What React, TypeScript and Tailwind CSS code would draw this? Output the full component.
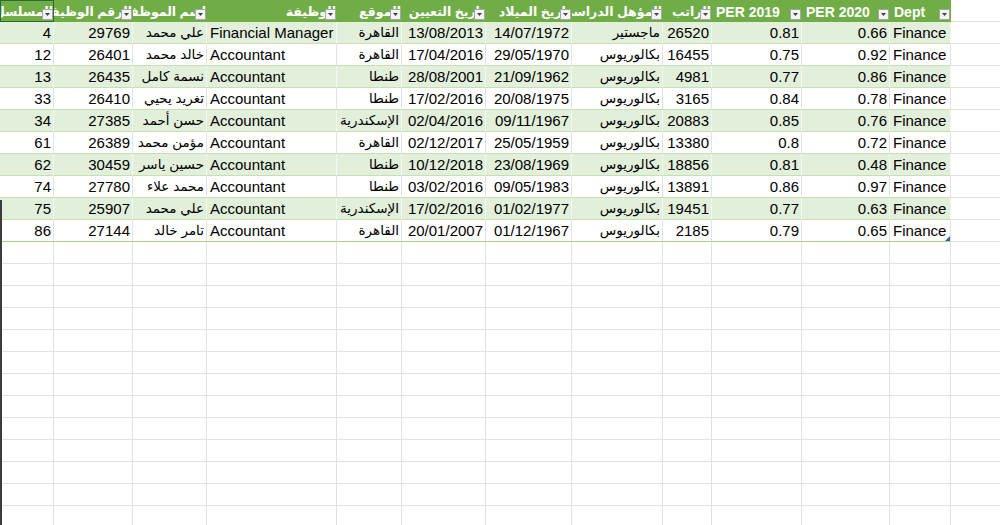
const widths = [
  'w-[54px]', 'w-[79px]', 'w-[74px]', 'w-[130px]', 'w-[65px]', 'w-[84px]',
  'w-[86px]', 'w-[91px]', 'w-[49px]', 'w-[90px]', 'w-[88px]', 'w-[61px]',
];

// 'r' = right aligned (numbers, arabic), 'l' = left aligned (latin text)
const align = ['r', 'r', 'r', 'l', 'r', 'r', 'r', 'r', 'r', 'r', 'r', 'l'];

const headers = [
  'المسلسل', 'الرقم الوظيفي', 'اسم الموظف', 'الوظيفة', 'الموقع', 'تاريخ التعيين',
  'تاريخ الميلاد', 'المؤهل الدراسي', 'الراتب', 'PER 2019', 'PER 2020', 'Dept',
];
const headerAlign = ['r', 'r', 'r', 'r', 'r', 'r', 'r', 'r', 'r', 'l', 'l', 'l'];

const rows = [
  ['4', '29769', 'علي محمد', 'Financial Manager', 'القاهرة', '13/08/2013', '14/07/1972', 'ماجستير', '26520', '0.81', '0.66', 'Finance'],
  ['12', '26401', 'خالد محمد', 'Accountant', 'القاهرة', '17/04/2016', '29/05/1970', 'بكالوريوس', '16455', '0.75', '0.92', 'Finance'],
  ['13', '26435', 'نسمة كامل', 'Accountant', 'طنطا', '28/08/2001', '21/09/1962', 'بكالوريوس', '4981', '0.77', '0.86', 'Finance'],
  ['33', '26410', 'تغريد يحيي', 'Accountant', 'طنطا', '17/02/2016', '20/08/1975', 'بكالوريوس', '3165', '0.84', '0.78', 'Finance'],
  ['34', '27385', 'حسن أحمد', 'Accountant', 'الإسكندرية', '02/04/2016', '09/11/1967', 'بكالوريوس', '20883', '0.85', '0.76', 'Finance'],
  ['61', '26389', 'مؤمن محمد', 'Accountant', 'القاهرة', '02/12/2017', '25/05/1959', 'بكالوريوس', '13380', '0.8', '0.72', 'Finance'],
  ['62', '30459', 'حسين ياسر', 'Accountant', 'طنطا', '10/12/2018', '23/08/1969', 'بكالوريوس', '18856', '0.81', '0.48', 'Finance'],
  ['74', '27780', 'محمد علاء', 'Accountant', 'طنطا', '03/02/2016', '09/05/1983', 'بكالوريوس', '13891', '0.86', '0.97', 'Finance'],
  ['75', '25907', 'علي محمد', 'Accountant', 'الإسكندرية', '17/02/2016', '01/02/1977', 'بكالوريوس', '19451', '0.77', '0.63', 'Finance'],
  ['86', '27144', 'تامر خالد', 'Accountant', 'القاهرة', '20/01/2007', '01/12/1967', 'بكالوريوس', '2185', '0.79', '0.65', 'Finance'],
];

const emptyRows = Array.from({ length: 13 });
const isArabic = (s: string) => /[\u0600-\u06FF]/.test(s);

const FilterButton = () => (
  <div className="absolute right-[1px] top-[9px] w-[11px] h-[11px] bg-[#f4f4f4] border border-[#a6a6a6] flex items-center justify-center">
    <svg width="5" height="3" viewBox="0 0 5 3">
      <path d="M0 0 L5 0 L2.5 3 Z" fill="#444" />
    </svg>
  </div>
);

export default function App() {
  return (
    <div className="relative w-[1000px] h-[525px] overflow-hidden bg-white text-black" style={{ fontFamily: '"Liberation Sans", "DejaVu Sans", sans-serif' }}>
      {/* header */}
      <div className="flex h-[22px]">
        {headers.map((h, i) => (
          <div key={i} className={`relative shrink-0 h-full overflow-hidden bg-[#70ad47] text-white font-bold flex items-end pb-[1px] ${widths[i]} ${headerAlign[i] === 'r' ? 'justify-end pr-[1px]' : 'justify-start pl-[4px]'}`}>
            <span className={`shrink-0 whitespace-nowrap ${isArabic(h) ? 'text-[12.5px] leading-[18px]' : 'text-[14px] leading-[18px]'}`}>{h}</span>
            <FilterButton />
            {i === 0 && <div className="absolute inset-0 border border-[#2a6b34]" />}
          </div>
        ))}
        <div className="flex-1 h-full border-b border-[#e1e1e1]" />
      </div>

      {/* data rows */}
      {rows.map((r, ri) => {
        const band = ri % 2 === 0;
        const last = ri === rows.length - 1;
        return (
          <div key={ri} className="flex h-[22px]">
            {r.map((v, ci) => (
              <div
                key={ci}
                className={`relative shrink-0 h-full overflow-hidden flex items-end pb-[1px] border-b border-r ${widths[ci]} ${band ? 'bg-[#e2efda] border-r-[#f3f9ef]' : 'bg-white border-r-[#e3e3e3]'} ${last ? 'border-b-[#a9d08e]' : 'border-b-[#c6e0b4]'} ${align[ci] === 'r' ? 'justify-end pr-[2px]' : 'justify-start pl-[3px]'}`}
              >
                <span className={`shrink-0 whitespace-nowrap leading-[18px] ${isArabic(v) ? 'text-[13.5px]' : 'text-[15px]'}`}>{v}</span>
                {last && ci === r.length - 1 && (
                  <svg className="absolute right-0 bottom-0" width="5" height="5" viewBox="0 0 5 5">
                    <path d="M5 0 L5 5 L0 5 Z" fill="#2f5fb3" />
                  </svg>
                )}
              </div>
            ))}
            <div className="flex-1 h-full border-b border-[#e1e1e1]" />
          </div>
        );
      })}

      {/* empty grid */}
      {emptyRows.map((_, ri) => (
        <div key={ri} className="flex h-[22px]">
          {widths.map((w, ci) => (
            <div key={ci} className={`shrink-0 h-full border-b border-r border-[#e1e1e1] ${w}`} />
          ))}
          <div className="flex-1 h-full border-b border-[#e1e1e1]" />
        </div>
      ))}

      <div className="absolute left-0 top-[200px] bottom-0 w-[2px] bg-[#3c3c3c]" />
    </div>
  );
}
